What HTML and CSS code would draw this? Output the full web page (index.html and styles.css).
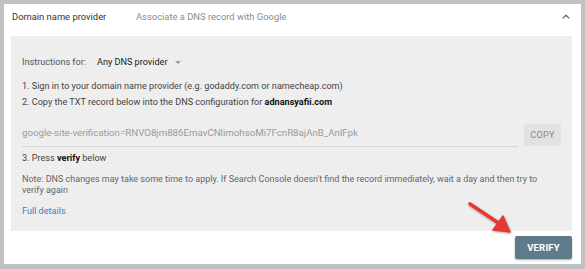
FILE: index.html
```html
<!DOCTYPE html>
<html>
<head>
<meta charset="utf-8">
<link rel="stylesheet" href="styles.css">
</head>
<body>
<div class="card">
  <div class="header">
    <span class="title">Domain name provider</span>
    <span class="subtitle">Associate a DNS record with Google</span>
    <svg class="chevron" width="8" height="5" viewBox="0 0 8 5"><path d="M0.8 4.4 L4 1.2 L7.2 4.4" fill="none" stroke="#666" stroke-width="1.3"/></svg>
  </div>
  <div class="panel">
    <div class="instr">
      <span class="instr-label">Instructions for:</span>
      <span class="instr-value">Any DNS provider</span>
      <span class="caret"></span>
    </div>
    <p class="step">1. Sign in to your domain name provider (e.g. godaddy.com or namecheap.com)</p>
    <p class="step">2. Copy the TXT record below into the DNS configuration for <b>adnansyafii.com</b></p>
    <div class="record">
      <div class="field">google-site-verification=RNVO8jm886EmavCNlimohsoMi7FcnR8ajAnB_AnlFpk</div>
      <button class="copy">COPY</button>
    </div>
    <p class="step step3">3. Press <b>verify</b> below</p>
    <p class="note">Note: DNS changes may take some time to apply. If Search Console doesn't find the record immediately, wait a day and then try to verify again</p>
    <a class="link">Full details</a>
  </div>
  <div class="footer">
    <button class="verify">VERIFY</button>
  </div>
  <svg class="arrow" width="60" height="45" viewBox="0 0 60 45">
    <defs><filter id="sh" x="-20%" y="-20%" width="140%" height="140%"><feDropShadow dx="0.5" dy="1" stdDeviation="1" flood-color="#000" flood-opacity="0.35"/></filter></defs>
    <g filter="url(#sh)">
      <path d="M7 5 L37 25" stroke="#e53935" stroke-width="3.6" stroke-linecap="round"/>
      <path d="M47 33 L30 31 L40 17 Z" fill="#e53935" stroke="#e53935" stroke-width="1.5" stroke-linejoin="round"/>
    </g>
  </svg>
</div>
</body>
</html>
```
FILE: styles.css
```css
* { box-sizing: border-box; }
html, body { margin: 0; padding: 0; }
body {
  background: #c1c1c1;
  font-family: Roboto, "Liberation Sans", Arial, sans-serif;
  width: 585px;
  height: 269px;
  padding: 4px 4px 5px 4px;
}
.card {
  position: relative;
  background: #fff;
  height: 260px;
  padding: 0 9px 0 7px;
  display: flex;
  flex-direction: column;
}
.header {
  height: 32px;
  display: flex;
  align-items: center;
  padding-left: 1px;
  padding-bottom: 7px;
  font-size: 9.4px;
}
.title { color: #333; width: 124px; }
.subtitle { color: #8a8a8a; flex: 1; }
.chevron { margin-right: 2px; margin-top: -1px; }
.panel {
  background: #eeeeee;
  height: 195px;
  padding: 17px 11px 0 11px;
  font-size: 9.1px;
  color: #444;
}
.instr { display: flex; align-items: center; height: 18px; margin-bottom: 7px; }
.instr-label { color: #555; margin-right: 11px; }
.instr-value { color: #222; }
.caret {
  width: 0; height: 0;
  border-left: 3.5px solid transparent;
  border-right: 3.5px solid transparent;
  border-top: 3.5px solid #999;
  margin-left: 7px;
  margin-top: 1px;
}
.step { margin: 0; line-height: 16px; }
.step b, .note b { color: #111; }
.record { display: flex; align-items: flex-end; margin-top: 14px; height: 23px; }
.field {
  flex: 1;
  color: #9a9a9a;
  font-size: 9.7px;
  border-bottom: 1px solid #d4d4d4;
  height: 22px;
  line-height: 16px;
  margin-right: 6px;
}
.copy {
  font: inherit;
  font-size: 9px;
  color: #888;
  background: #e2e2e2;
  border: none;
  border-radius: 2px;
  width: 37px;
  height: 22px;
  padding: 0;
  margin-bottom: 1px;
  letter-spacing: 0.3px;
}
.step3 { margin-top: 3px; }
.note { margin: 8px 0 0 0; line-height: 11px; color: #666; font-size: 9px; }
.link { display: block; color: #4a78d0; margin-top: 8px; line-height: 14px; }
.footer {
  display: flex;
  justify-content: flex-end;
  padding-top: 5px;
}
.verify {
  font: inherit;
  font-weight: 700;
  font-size: 9.5px;
  color: #fff;
  background: #5f7b89;
  border: none;
  border-radius: 2px;
  width: 57px;
  height: 23px;
  box-shadow: 0 1px 2px rgba(0,0,0,0.35);
  letter-spacing: 0.2px;
}
.arrow { position: absolute; left: 459px; top: 195px; }
```
